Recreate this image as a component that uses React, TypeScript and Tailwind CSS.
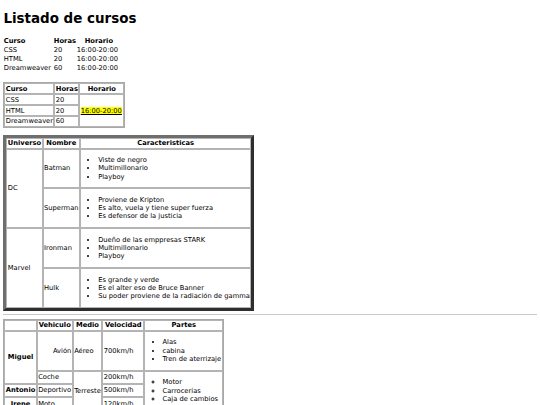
import React from "react";

// page rendered at ~0.42 scale: 16px base -> 6.72px
const cell = "border border-[#b4b4b4] p-[0.42px]";
const head = "border border-[#b4b4b4] p-[0.42px] font-bold text-center";

function Lista({ items, circle }: { items: string[]; circle?: boolean }) {
  return (
    <ul
      className={
        circle
          ? "list-[circle] pl-[16.8px] my-[6.3px]"
          : "list-disc pl-[16.8px] my-[6.3px]"
      }
    >
      {items.map((it) => (
        <li key={it}>{it}</li>
      ))}
    </ul>
  );
}

export default function App() {
  const cursos = [
    ["CSS", "20"],
    ["HTML", "20"],
    ["Dreamweaver", "60"],
  ];

  return (
    <div className="min-h-[405px] bg-white px-[3.4px] pb-[3.4px] font-['DejaVu_Sans',Verdana,sans-serif] text-[6.72px] leading-[8.15px] text-black">
      <h1 className="mt-[11px] mb-[9px] text-[13.44px] leading-[16.3px] font-bold">Listado de cursos</h1>

      {/* tabla sin bordes */}
      <table className="border-separate border-spacing-[0.84px]">
        <tbody>
          <tr>
            <th className="p-[0.42px] text-left font-bold w-[50px]">Curso</th>
            <th className="p-[0.42px] text-center font-bold w-[23px]">Horas</th>
            <th className="p-[0.42px] text-center font-bold w-[45px]">Horario</th>
          </tr>
          {cursos.map(([c, h]) => (
            <tr key={c}>
              <td className="p-[0.42px]">{c}</td>
              <td className="p-[0.42px]">{h}</td>
              <td className="p-[0.42px]">16:00-20:00</td>
            </tr>
          ))}
        </tbody>
      </table>

      <table className="mt-[10px] border-separate border-spacing-[0.84px] border border-[#a8a8a8]">
        <tbody>
          <tr>
            <th className={`${cell} font-bold text-left w-[49px]`}>Curso</th>
            <th className={`${head} w-[24px]`}>Horas</th>
            <th className={`${head} w-[45px]`}>Horario</th>
          </tr>
          <tr>
            <td className={cell}>CSS</td>
            <td className={cell}>20</td>
            <td className={cell} rowSpan={3}>
              <mark className="bg-[#ffff00] text-black underline">16:00-20:00</mark>
            </td>
          </tr>
          <tr>
            <td className={cell}>HTML</td>
            <td className={cell}>20</td>
          </tr>
          <tr>
            <td className={cell}>Dreamweaver</td>
            <td className={cell}>60</td>
          </tr>
        </tbody>
      </table>

      <table className="mt-[6.5px] border-separate border-spacing-[0.84px] border-[3px] border-t-[#6e6e6e] border-l-[#6e6e6e] border-r-[#2e2e2e] border-b-[#2e2e2e]">
        <tbody>
          <tr>
            <th className={`${head} w-[34px]`}>Universo</th>
            <th className={`${head} w-[37px]`}>Nombre</th>
            <th className={head}>Caracteristicas</th>
          </tr>
          <tr>
            <td className={cell} rowSpan={2}>DC</td>
            <td className={cell}>Batman</td>
            <td className={cell}>
              <Lista items={["Viste de negro", "Multimillonario", "Playboy"]} />
            </td>
          </tr>
          <tr>
            <td className={cell}>Superman</td>
            <td className={cell}>
              <Lista
                items={[
                  "Proviene de Kripton",
                  "Es alto, vuela y tiene super fuerza",
                  "Es defensor de la justicia",
                ]}
              />
            </td>
          </tr>
          <tr>
            <td className={cell} rowSpan={2}>Marvel</td>
            <td className={cell}>Ironman</td>
            <td className={cell}>
              <Lista items={["Dueño de las emppresas STARK", "Multimillonario", "Playboy"]} />
            </td>
          </tr>
          <tr>
            <td className={cell}>Hulk</td>
            <td className={cell}>
              <Lista
                items={[
                  "Es grande y verde",
                  "Es el alter eso de Bruce Banner",
                  "Su poder proviene de la radiación de gamma",
                ]}
              />
            </td>
          </tr>
        </tbody>
      </table>

      <hr className="my-[3.4px] border-t border-[#c8c8c8]" />

      <table className="border-separate border-spacing-[0.84px] border border-[#a8a8a8]">
        <tbody>
          <tr>
            <th className={`${head} w-[31px]`}></th>
            <th className={`${head} w-[36px]`}>Vehiculo</th>
            <th className={`${head} w-[27px]`}>Medio</th>
            <th className={`${head} w-[42px]`}>Velocidad</th>
            <th className={`${head} w-[79px]`}>Partes</th>
          </tr>
          <tr>
            <th className={head} rowSpan={2}>Miguel</th>
            <td className={`${cell} text-right`}>Avión</td>
            <td className={cell}>Aéreo</td>
            <td className={cell}>700km/h</td>
            <td className={cell}>
              <Lista items={["Alas", "cabina", "Tren de aterrizaje"]} />
            </td>
          </tr>
          <tr>
            <td className={cell}>Coche</td>
            <td className={cell} rowSpan={3}>Terreste</td>
            <td className={cell}>200km/h</td>
            <td className={cell} rowSpan={3}>
              <Lista circle items={["Motor", "Carrocerías", "Caja de cambios"]} />
            </td>
          </tr>
          <tr>
            <th className={head}>Antonio</th>
            <td className={cell}>Deportivo</td>
            <td className={cell}>500km/h</td>
          </tr>
          <tr>
            <th className={head}>Irene</th>
            <td className={cell}>Moto</td>
            <td className={cell}>120km/h</td>
          </tr>
        </tbody>
      </table>
    </div>
  );
}
